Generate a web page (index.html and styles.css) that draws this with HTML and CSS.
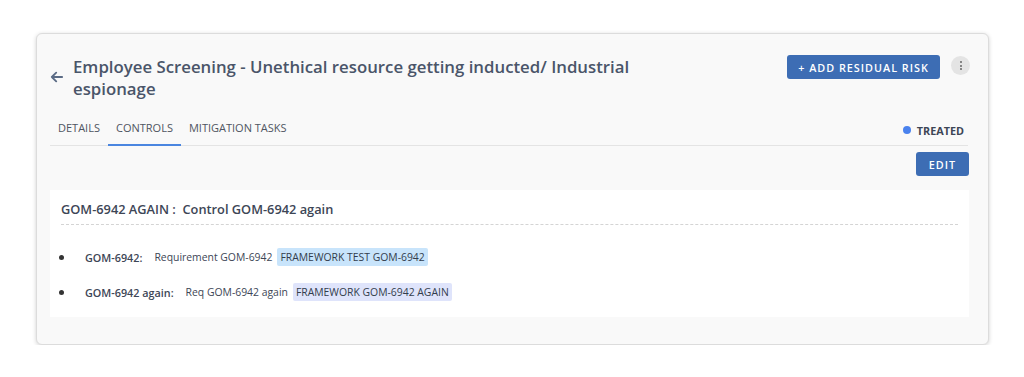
FILE: index.html
```html
<!DOCTYPE html>
<html>
<head>
<meta charset="utf-8">
<link rel="stylesheet" href="styles.css">
</head>
<body>
<div class="card">
  <div class="header">
    <div class="title-wrap">
      <svg class="back" width="13" height="12" viewBox="0 0 13 12"><path d="M12.2 6H1.8M6.2 1.6L1.8 6l4.4 4.4" fill="none" stroke="#5b6b85" stroke-width="1.8" stroke-linecap="round" stroke-linejoin="round"/></svg>
      <h1 class="title">Employee Screening - Unethical resource getting inducted/ Industrial espionage</h1>
    </div>
    <div class="actions">
      <button class="btn btn-add">+ ADD RESIDUAL RISK</button>
      <div class="kebab"><span></span><span></span><span></span></div>
    </div>
  </div>
  <div class="tabs-row">
    <div class="tabs">
      <div class="tab">DETAILS</div>
      <div class="tab active">CONTROLS</div>
      <div class="tab">MITIGATION TASKS</div>
    </div>
    <div class="status"><span class="dot"></span>TREATED</div>
  </div>
  <div class="edit-row"><button class="btn btn-edit">EDIT</button></div>
  <div class="panel">
    <div class="panel-head">GOM-6942 AGAIN :&nbsp; Control GOM-6942 again</div>
    <ul class="reqs">
      <li><span class="code">GOM-6942:</span><span class="desc">Requirement GOM-6942</span><span class="tag tag-a">FRAMEWORK TEST GOM-6942</span></li>
      <li><span class="code">GOM-6942 again:</span><span class="desc">Req GOM-6942 again</span><span class="tag tag-b">FRAMEWORK GOM-6942 AGAIN</span></li>
    </ul>
  </div>
</div>
</body>
</html>
```
FILE: styles.css
```css
* { box-sizing: border-box; }
body {
  margin: 0;
  background: #ffffff;
  font-family: "Open Sans", "Liberation Sans", sans-serif;
  color: #3d4656;
}
.card {
  margin: 33px 0 0 36px;
  width: 953px;
  height: 312px;
  background: #f9f9f9;
  border: 1px solid #dcdcdc;
  border-radius: 6px;
  box-shadow: 0 1px 4px rgba(0,0,0,0.18);
  padding: 0 19px 0 13px;
}
.header {
  display: flex;
  justify-content: space-between;
  align-items: flex-start;
  padding-top: 21px;
}
.title-wrap {
  display: flex;
  align-items: flex-start;
  padding-top: 1px;
}
.back { margin: 15px 10px 0 0; flex: none; }
.title {
  margin: 0;
  width: 580px;
  font-size: 16.8px;
  line-height: 22px;
  font-weight: 600;
  color: #4a5569;
}
.actions { display: flex; align-items: flex-start; gap: 11px; margin-right: -1px; }
.btn {
  border: none;
  background: #3d6db4;
  color: #fff;
  font-family: inherit;
  font-weight: 600;
  font-size: 10.8px;
  letter-spacing: 1px;
  border-radius: 3px;
  height: 24px;
  padding: 0;
}
.btn-add { width: 153px; }
.kebab {
  margin-top: 1px;
  width: 19px;
  height: 19px;
  border-radius: 50%;
  background: #e4e4e4;
  display: flex;
  flex-direction: column;
  align-items: center;
  justify-content: center;
  gap: 1.5px;
}
.kebab span { width: 2px; height: 2px; border-radius: 50%; background: #666; }
.tabs-row {
  margin-top: 17px;
  display: flex;
  justify-content: space-between;
  align-items: stretch;
  border-bottom: 1px solid #e4e4e4;
  margin-right: 1px;
}
.tabs { display: flex; }
.tab {
  font-size: 11px;
  color: #4f5561;
  padding: 3px 8px 9px;
  border-bottom: 2px solid transparent;
  margin-bottom: -1px;
}
.tab.active { border-bottom-color: #4a86e0; }
.status {
  display: flex;
  align-items: center;
  font-size: 10.8px;
  font-weight: 700;
  color: #3d4656;
  padding-top: 4px;
  padding-bottom: 6px;
  margin-right: 4px;
}
.dot { width: 8px; height: 8px; border-radius: 50%; background: #4a82ee; margin-right: 6px; }
.edit-row { display: flex; justify-content: flex-end; margin-top: 6px; }
.btn-edit { width: 53px; }
.panel {
  margin-top: 14px;
  background: #ffffff;
  height: 127px;
  padding: 10px 11px 0 11px;
}
.panel-head {
  font-size: 12.8px;
  font-weight: 600;
  color: #3d4656;
  padding-bottom: 6px;
  border-bottom: 1px dashed #d4d4d4;
}
.reqs { margin: 23px 0 0; padding: 0; list-style: none; }
.reqs li {
  display: flex;
  align-items: center;
  color: #3d4656;
  height: 18px;
  margin-bottom: 17px;
}
.reqs li::before {
  content: "";
  width: 5px;
  height: 5px;
  border-radius: 50%;
  background: #333;
  margin-right: 21px;
  margin-left: -2px;
}
.code { font-weight: 600; font-size: 10.8px; margin-right: 12px; }
.desc { font-size: 10.4px; margin-right: 5px; }
.tag { font-size: 10.4px; padding: 0 3px; line-height: 18px; border-radius: 2px; color: #333d4d; }
.tag-a { background: #c8e4fb; }
.tag-b { background: #dfe4fb; }
```
